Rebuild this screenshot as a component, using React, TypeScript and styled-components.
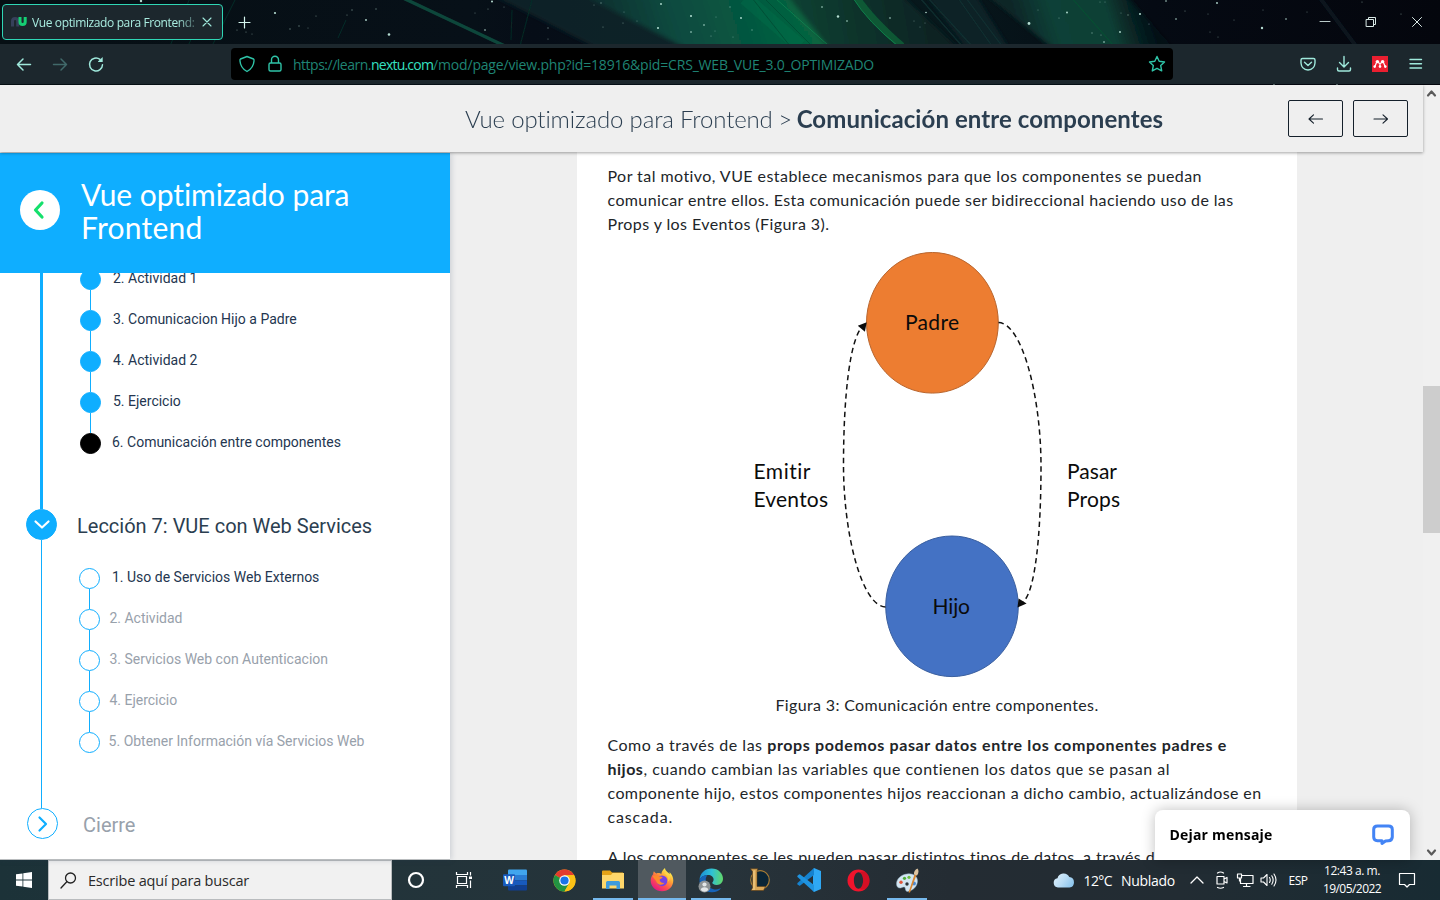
import React from "react";
import styled, { createGlobalStyle, css } from "styled-components";

const GlobalStyle = createGlobalStyle`
  *, *::before, *::after { box-sizing: border-box; }
  body { margin: 0; overflow: hidden; background: #efefef; }
`;

const ui = `"Open Sans", "Noto Sans", sans-serif`;
const lato = `Lato, "Open Sans", sans-serif`;
const roboto = `Roboto, "Liberation Sans", sans-serif`;
const blue = "#0faeff";

const Screen = styled.div`
  width: 1440px;
  height: 900px;
  display: flex;
  flex-direction: column;
  overflow: hidden;
`;

const Track = styled.span<{ $ls?: number; $color?: string }>`
  letter-spacing: ${(p) => p.$ls ?? 0}px;
  ${(p) => p.$color && css`color: ${p.$color};`}
`;

const Spacer = styled.span<{ $w: number }>`
  width: ${(p) => p.$w}px;
  flex: none;
`;

/* ---------- browser chrome ---------- */

const Chrome = styled.header`
  position: relative;
  height: 85px;
  flex: none;
  background: #050a10;
  font-family: ${ui};
`;

const NightSky = styled.svg`
  position: absolute;
  inset: 0;
  display: block;
`;

const TitleBar = styled.div`
  position: relative;
  height: 44px;
  display: flex;
  align-items: flex-start;
  padding: 4px 0 0 2px;
`;

const Tab = styled.div`
  width: 221px;
  height: 36px;
  border: 1px solid #2fd6b5;
  border-radius: 4px;
  background: #1c272d;
  display: flex;
  align-items: center;
  padding: 0 10px 0 7px;
`;

const TabLabel = styled.div`
  width: 164px;
  margin-left: 4px;
  margin-right: 6px;
  padding-top: 1px;
  overflow: hidden;
  white-space: nowrap;
  font-size: 12px;
  line-height: 18px;
  letter-spacing: -0.38px;
  color: #a9ece0;
  mask-image: linear-gradient(to right, #000 145px, rgba(0, 0, 0, 0.3) 163px);
`;

const NewTab = styled.div`
  margin: 12px 0 0 15px;
  line-height: 0;
`;

const WindowButtons = styled.div`
  margin-left: auto;
  display: flex;
  height: 36px;
  & > span {
    width: 46px;
    display: flex;
    align-items: center;
    justify-content: center;
  }
`;

const NavBar = styled.div`
  position: relative;
  height: 40px;
  display: flex;
  align-items: center;
  background: #1c272d;
  padding: 0 14px 0 15px;
`;

const NavButtons = styled.div`
  display: flex;
  gap: 18px;
  width: 216px;
`;

const UrlBar = styled.div`
  width: 942px;
  height: 32px;
  border-radius: 4px;
  background: #000;
  display: flex;
  align-items: center;
  padding: 0 7px;
`;

const Url = styled.div`
  margin-left: 9px;
  flex: 1;
  white-space: nowrap;
  font-size: 14px;
  line-height: 20px;
  padding-top: 2px;
  color: #1f8474;
`;

const Tools = styled.div`
  margin-left: auto;
  display: flex;
  gap: 16px;
`;

/* ---------- page ---------- */

const Viewport = styled.div`
  position: relative;
  flex: 1;
  min-height: 0;
  display: flex;
  background: #efefef;
`;

const Page = styled.div`
  flex: 1;
  display: flex;
  flex-direction: column;
  min-width: 0;
`;

const PageHeader = styled.div`
  position: relative;
  z-index: 2;
  height: 67px;
  flex: none;
  display: flex;
  align-items: center;
  background: #efefef;
  box-shadow: 0 1px 3px rgba(0, 0, 0, 0.36);
  padding: 0 15px 0 465px;
`;

const Crumbs = styled.h1`
  margin: 0;
  flex: 1;
  white-space: nowrap;
  font: 300 24px/30px ${lato};
  color: #2b3e50;
  b { font-weight: 700; }
`;

const PageButton = styled.button`
  width: 55px;
  height: 37px;
  margin-left: 10px;
  padding: 0;
  border: 1px solid #15202b;
  border-radius: 2px;
  background: transparent;
  display: flex;
  align-items: center;
  justify-content: center;
`;

const Columns = styled.div`
  flex: 1;
  min-height: 0;
  display: flex;
`;

const Sidebar = styled.nav`
  position: relative;
  z-index: 1;
  width: 450px;
  flex: none;
  margin-top: 1px;
  display: flex;
  flex-direction: column;
  background: #fff;
  border-bottom: 1px solid #b9bcbe;
  box-shadow: 1px 0 6px rgba(40, 60, 90, 0.2);
`;

const CourseBanner = styled.div`
  height: 120px;
  flex: none;
  display: flex;
  align-items: center;
  padding-left: 20px;
  padding-bottom: 6px;
  background: ${blue};
`;

const BackCircle = styled.div`
  width: 40px;
  height: 40px;
  border-radius: 50%;
  background: #fff;
  display: flex;
  align-items: center;
  justify-content: center;
`;

const CourseTitle = styled.div`
  margin-left: 21px;
  padding-top: 2px;
  font: 400 30px/33px ${lato};
  color: #fff;
`;

const Outline = styled.div`
  flex: 1;
  min-height: 0;
  overflow: hidden;
`;

const Section = styled.div<{ $height: number }>`
  display: flex;
  height: ${(p) => p.$height}px;
`;

const Rail = styled.div<{ $thick?: boolean }>`
  width: ${(p) => (p.$thick ? 3 : 1)}px;
  margin-left: ${(p) => (p.$thick ? 40 : 41)}px;
  background: ${blue};
`;

const Steps = styled.ul<{ $left: number; $top: number }>`
  list-style: none;
  margin: ${(p) => p.$top}px 0 0 ${(p) => p.$left}px;
  padding: 0;
`;

const Step = styled.li`
  display: flex;
  height: 41px;
`;

const StepMark = styled.div`
  width: 21px;
  display: flex;
  flex-direction: column;
  align-items: center;
`;

const Dot = styled.div<{ $kind: "done" | "current" | "open" }>`
  width: 21px;
  height: 21px;
  flex: none;
  border-radius: 50%;
  border: 1px solid ${(p) => (p.$kind === "current" ? "#000" : blue)};
  background: ${(p) => ({ done: blue, current: "#000", open: "#fff" })[p.$kind]};
`;

const Link = styled.div`
  flex: 1;
  width: 1px;
  background: ${blue};
`;

const StepLabel = styled.div<{ $gap: number; $muted?: boolean }>`
  margin-left: ${(p) => p.$gap}px;
  font: 400 14px/19px ${roboto};
  color: ${(p) => (p.$muted ? "#98a1ab" : "#243650")};
  white-space: nowrap;
`;

const LessonRow = styled.div<{ $left: number }>`
  display: flex;
  align-items: center;
  height: 31px;
  padding-left: ${(p) => p.$left}px;
`;

const LessonBadge = styled.div<{ $filled?: boolean }>`
  width: 31px;
  height: 31px;
  border-radius: 50%;
  border: 1px solid ${blue};
  background: ${(p) => (p.$filled ? blue : "#fff")};
  display: flex;
  align-items: center;
  justify-content: center;
`;

const LessonTitle = styled.div<{ $gap: number; $muted?: boolean }>`
  margin-left: ${(p) => p.$gap}px;
  padding-top: 3px;
  font: 400 20px/24px ${roboto};
  color: ${(p) => (p.$muted ? "#98a1ab" : "#2b3e50")};
`;

const Main = styled.main`
  flex: 1;
  min-width: 0;
  overflow: hidden;
  padding-left: 127px;
`;

const Article = styled.article`
  width: 720px;
  height: 760px;
  padding: 12px 30px 0;
  background: #fff;
  font: 400 16px/24px ${lato};
  color: #212529;
`;

const Paragraph = styled.p`
  margin: 0 0 16px 0.5px;
  white-space: nowrap;
`;

const Line = styled.span<{ $ls: number }>`
  display: block;
  letter-spacing: ${(p) => p.$ls}px;
`;

const Figure = styled.figure`
  margin: -16px 0 16px;
  svg { display: block; }
`;

const Caption = styled.figcaption`
  text-align: center;
  letter-spacing: 0.35px;
`;

const ScrollBar = styled.div`
  width: 17px;
  background: #f0f0f0;
  display: flex;
  flex-direction: column;
  align-items: center;
  justify-content: space-between;
`;

const Thumb = styled.div`
  width: 17px;
  height: 147px;
  margin-bottom: 166px;
  margin-top: 140px;
  background: #cdcdcd;
`;

const ChatTab = styled.div`
  position: absolute;
  z-index: 3;
  left: 1155px;
  bottom: 0;
  width: 255px;
  height: 50px;
  display: flex;
  align-items: center;
  justify-content: space-between;
  padding: 0 16px 0 14.5px;
  border-radius: 8px 8px 0 0;
  background: #fff;
  box-shadow: 0 0 14px rgba(0, 0, 0, 0.25);
  font: 700 14px/20px ${ui};
  letter-spacing: 0.19px;
  color: #000;
`;

/* ---------- taskbar ---------- */

const Taskbar = styled.footer`
  height: 40px;
  flex: none;
  display: flex;
  background: linear-gradient(90deg, #1c3238 0%, #22343a 26%, #27333a 50%, #242c33 66%, #222c33 82%, #182b33 100%);
  font-family: ${ui};
  color: #fff;
`;

const StartButton = styled.div`
  width: 48px;
  display: flex;
  align-items: center;
  justify-content: center;
`;

const SearchBox = styled.div`
  width: 344px;
  display: flex;
  align-items: center;
  padding-left: 11px;
  border: 1px solid #b9bcbe;
  background: #f1f1f1;
  color: #2a2a2a;
  font-size: 14.5px;
  letter-spacing: -0.2px;
  span { margin-left: 11px; }
`;

const Apps = styled.div`
  display: flex;
  gap: 1px;
  margin-left: 3px;
`;

const AppButton = styled.div<{ $running?: boolean; $active?: boolean }>`
  width: 48px;
  height: 40px;
  display: flex;
  align-items: center;
  justify-content: center;
  background: ${(p) =>
    p.$active
      ? "linear-gradient(#76b9ed, #76b9ed) center bottom / 48px 2px no-repeat, #50595f"
      : p.$running
        ? "linear-gradient(#76b9ed, #76b9ed) center bottom / 40px 2px no-repeat"
        : "none"};
`;

const Tray = styled.div`
  margin-left: auto;
  display: flex;
  align-items: center;
  padding-right: 24px;
`;

const Weather = styled.div`
  display: flex;
  align-items: center;
  font-size: 14px;
  line-height: 20px;
  padding-top: 1px;
  margin-right: 13px;
  svg { margin: 0 9px 1px 0; }
`;

const TrayIcons = styled.div`
  display: flex;
  align-items: center;
  gap: 6px;
  margin-right: 2px;
`;

const Language = styled.div`
  width: 36px;
  text-align: center;
  font-size: 12px;
  letter-spacing: -0.5px;
`;

const Clock = styled.div`
  width: 72px;
  text-align: center;
  font-size: 12px;
  line-height: 18px;
  display: flex;
  flex-direction: column;
  margin-right: 10px;
`;

/* ---------- drawings ---------- */

const stars: [number, number, number][] = [
  [141, 1, 1.2], [275, 13, 1.1], [316, 16, 0.6], [352, 10, 0.7], [347, 15, 0.6], [376, 9, 0.7], [366, 20, 0.9],
  [389, 34.5, 1.3], [299, 26, 0.7], [290, 29, 0.7], [308, 28, 0.5], [237, 30, 0.6], [246, 32, 0.6], [252, 34, 0.5],
  [492, 1.5, 1], [504, 7, 0.5], [488, 9, 0.6], [485, 30, 0.8], [548, 28, 0.7], [548, 39, 0.6], [601, 3, 0.7],
  [594, 5, 0.5], [624, 12, 0.5], [623, 23, 0.6], [637, 21, 0.5], [603, 27, 0.6], [661, 4, 0.9], [691, 16, 1],
  [658, 28, 1], [691, 32, 0.8], [704, 25, 0.8], [716, 17, 0.5], [715, 31, 0.5], [711, 36, 0.6], [730, 7, 0.7],
  [741, 18, 0.9], [752, 30, 0.7], [733, 37, 0.5], [822, 7, 0.8], [838, 16.5, 1.2], [847, 21, 0.8], [890, 18, 0.8],
  [926, 12.5, 0.8], [914, 21, 0.5], [925, 23, 0.5], [920, 27, 0.5], [1029, 23.5, 1.4], [1067, 12.5, 0.9],
  [1059, 18, 0.6], [1038, 10, 0.5], [1100, 2, 0.5], [1105, 2, 0.5], [1121, 13, 0.5], [1128, 15, 0.7],
  [1140, 14, 1], [1149, 24, 0.6], [1120, 32, 0.9], [1092, 33, 0.7], [1101, 35, 0.6], [1104, 42, 0.8],
  [1166, 1, 0.8], [1185, 11, 0.6], [1176, 19, 0.8], [1217, 3, 0.9], [1208, 14, 0.5], [1234, 20, 0.5],
  [1210, 32, 0.5], [1218, 37, 0.5], [1262, 28, 1.2], [1286, 19, 0.8], [1263, 10, 0.5], [1307, 12, 0.5],
  [1274, 84, 0.8], [1337, 84, 0.8], [1401, 14, 0.6], [475, 13, 0.5], [1362, 2, 0.6],
];

const SkyArt = () => (
  <NightSky width="1440" height="85" viewBox="0 0 1440 85">
    <defs>
      <linearGradient id="sky" x1="0" x2="1440" y1="0" y2="0" gradientUnits="userSpaceOnUse">
        <stop offset="0" stopColor="#060f14" />
        <stop offset="0.33" stopColor="#071018" />
        <stop offset="0.37" stopColor="#060d17" />
        <stop offset="0.65" stopColor="#07181c" />
        <stop offset="0.8" stopColor="#050a13" />
        <stop offset="1" stopColor="#04060d" />
      </linearGradient>
      <linearGradient id="glow" x1="560" x2="815" y1="60" y2="-20" gradientUnits="userSpaceOnUse">
        <stop offset="0" stopColor="#0a2026" stopOpacity="0.3" />
        <stop offset="0.2" stopColor="#0b3130" />
        <stop offset="0.45" stopColor="#0a4a3f" />
        <stop offset="0.7" stopColor="#06573f" />
        <stop offset="1" stopColor="#07693f" />
      </linearGradient>
      <linearGradient id="side" x1="780" x2="960" y1="30" y2="0" gradientUnits="userSpaceOnUse">
        <stop offset="0" stopColor="#0a4433" />
        <stop offset="0.5" stopColor="#0b302a" />
        <stop offset="1" stopColor="#0a1c20" />
      </linearGradient>
      <linearGradient id="beam" x1="1020" x2="1145" y1="40" y2="0" gradientUnits="userSpaceOnUse">
        <stop offset="0" stopColor="#0b2527" />
        <stop offset="0.3" stopColor="#0b4137" />
        <stop offset="0.7" stopColor="#0b3f35" />
        <stop offset="1" stopColor="#07181b" stopOpacity="0.5" />
      </linearGradient>
      <filter id="soft"><feGaussianBlur stdDeviation="2" /></filter>
      <filter id="faint"><feGaussianBlur stdDeviation="0.5" /></filter>
    </defs>
    <rect width="1440" height="85" fill="url(#sky)" />
    <g filter="url(#soft)">
      <path d="M490-6H620L720 50H600Z" fill="#0a2429" opacity="0.8" />
      <path d="M745-6H900L960 50H800Z" fill="url(#side)" />
      <path d="M580-6H786L830 50H690Z" fill="url(#glow)" />
      <path d="M985-6H1125L1175 50H1055Z" fill="url(#beam)" />
      <path d="M925-6H975L1010 50H968Z" fill="#0a2226" />
    </g>
    <g filter="url(#faint)" fill="none">
      <path d="M403-2 507 47" stroke="#0f463b" strokeWidth="3.5" />
      <path d="M745-2 800 46" stroke="#0a7a4a" strokeWidth="14" opacity="0.25" />
      <path d="M775-2 829 46" stroke="#129257" strokeWidth="1" opacity="0.55" />
      <path d="M764-2 812 46M752-2 790 46" stroke="#053c2c" strokeWidth="1" opacity="0.5" />
      <path d="M857-2Q872 20 902 46" stroke="#0a6138" strokeWidth="7" opacity="0.8" />
      <path d="M853-2Q868 22 898 46" stroke="#12804a" strokeWidth="1" />
      <path d="M1070-4 1114 46" stroke="#0a5a30" strokeWidth="1" opacity="0.7" />
      <path d="M920-2 962 46M928-2 972 46M958-2 992 46M966-2 1002 46" stroke="#123636" strokeWidth="1.2" opacity="0.7" />
      <path d="M236-2 212 46M200 20 188 46M346 20 338 38M190-2 170 46" stroke="#0c4a38" strokeWidth="1" opacity="0.5" />
      <path d="M532 0 520 46M512 10 511 40" stroke="#0a3028" strokeWidth="1.2" opacity="0.7" />
      <path d="M1320-2 1356 46" stroke="#0b1d25" strokeWidth="4" opacity="0.7" />
    </g>
    {stars.map(([x, y, r], i) => (
      <circle key={i} cx={x} cy={y} r={r} fill="#c9f2e6" opacity={r > 0.7 ? 0.9 : 0.5} />
    ))}
  </NightSky>
);

const Stroke = ({ size = 20, color = "#9fe9dc", w = 1.4, d, vb }: { size?: number; color?: string; w?: number; d: string; vb?: string }) => (
  <svg width={size} height={size} viewBox={vb ?? `0 0 ${size} ${size}`} fill="none" stroke={color} strokeWidth={w} strokeLinecap="round" strokeLinejoin="round">
    <path d={d} />
  </svg>
);

const TabIcon = () => (
  <svg width="18" height="12" viewBox="0 0 18 12" fill="none" strokeWidth="3">
    <path d="M2.500 10.500V5a2.600 2.600 0 0 1 5.200 0v5.500" stroke="#36405a" />
    <path d="M10 1v5a2.600 2.600 0 0 0 5.200 0V1" stroke="#15cf74" />
  </svg>
);

const DiagramText = styled.text`
  font: 400 21px ${lato};
  font-variant-ligatures: none;
  fill: #0b0b0b;
`;

const Diagram = () => (
  <svg width="660" height="457" viewBox="607 236 660 457">
    <ellipse cx="932.400" cy="322.800" rx="65.900" ry="70.300" fill="#ed7d31" stroke="#b9652d" strokeWidth="1" />
    <ellipse cx="952" cy="606.300" rx="66.300" ry="70.300" fill="#4472c4" stroke="#3a5f9f" strokeWidth="1" />
    <g fill="none" stroke="#111" strokeWidth="1.500" strokeDasharray="5.400 3.800">
      <path d="M998.500 322.600C1022 323 1041 396 1041 466C1041 536 1035 592 1023 602" />
      <path d="M885.500 607C862 606 843.500 535 843.500 465C843.500 395 850 340 862 327" />
    </g>
    <path d="M866.700 322.300 857.800 325.800 864.900 331.800ZM1017.500 607.500 1018.600 598.600 1026.600 603.500Z" fill="#0b0b0b" />
    <DiagramText x="905" y="330.400" textLength="54">Padre</DiagramText>
    <DiagramText x="932.500" y="613.800" textLength="37.500">Hijo</DiagramText>
    <DiagramText x="753.500" y="479.200" textLength="57">Emitir</DiagramText>
    <DiagramText x="753.500" y="507.200" textLength="74.500">Eventos</DiagramText>
    <DiagramText x="1067" y="479.200" textLength="50">Pasar</DiagramText>
    <DiagramText x="1067" y="507.200" textLength="53">Props</DiagramText>
  </svg>
);

const WindowsLogo = () => (
  <svg width="16" height="16" viewBox="0 0 16 16" fill="#fff">
    <path d="M0 2.300 6.500 1.400V7.600H0ZM7.300 1.300 16 0V7.600H7.300ZM0 8.400H6.500V14.600L0 13.700ZM7.300 8.400H16V16L7.300 14.700Z" />
  </svg>
);

const TaskView = () => (
  <svg width="18" height="18" viewBox="0 0 18 18" fill="none" stroke="#fff" strokeWidth="1.200">
    <path d="M2.500 5.500H11.500V12.500H2.500ZM1.500 1V3.500H12.500V1M1.500 17V14.500H12.500V17M15.500 1V4.500M15.500 9.500V17" />
    <path d="M14 5.500h3v2.500h-3z" fill="#fff" stroke="none" />
  </svg>
);

const Word = () => (
  <svg width="24" height="24" viewBox="0 0 24 24">
    <path d="M6 1.500h17a1 1 0 0 1 1 1V7H5V2.500a1 1 0 0 1 1-1Z" fill="#41a5ee" />
    <path d="M5 7h19v5.200H5Z" fill="#2b7cd3" />
    <path d="M5 12.200h19v5.200H5Z" fill="#185abd" />
    <path d="M5 17.400h19v4.100a1 1 0 0 1-1 1H6a1 1 0 0 1-1-1Z" fill="#103f91" />
    <rect x="0" y="6.300" width="12" height="12" rx="1" fill="#185abd" />
    <text x="6" y="16" fontSize="10" fontWeight="700" fontFamily={ui} fill="#fff" textAnchor="middle">W</text>
  </svg>
);

const ChromeIcon = () => (
  <svg width="23" height="23" viewBox="0 0 24 24">
    <circle cx="12" cy="12" r="11.500" fill="#fbc116" />
    <path d="M12 12 2.040 6.250A11.500 11.500 0 0 1 21.960 6.250L12 6.500Z" fill="#e33b2e" />
    <path d="M2.040 6.250A11.500 11.500 0 0 0 12 23.500L16.800 14.800 12 12Z" fill="#229342" />
    <path d="M12 6.500H22.100A11.500 11.500 0 0 1 12 23.500L16.800 14.800Z" fill="#fbc116" />
    <circle cx="12" cy="12" r="5.500" fill="#fff" />
    <circle cx="12" cy="12" r="4.300" fill="#1a73e8" />
  </svg>
);

const Explorer = () => (
  <svg width="22" height="20" viewBox="0 0 22 20">
    <path d="M0 1.500Q0 .5 1 .5H8L10 2.500H21V6H0Z" fill="#e6a317" />
    <path d="M0 5H9L10.500 3H22V18.500H0Z" fill="#ffd76a" />
    <path d="M4 19V12.500Q4 11 5.500 11H16.500Q18 11 18 12.500V19H14.500V15.500H7.500V19Z" fill="#3f9bdc" />
  </svg>
);

const Firefox = () => (
  <svg width="24" height="24" viewBox="0 0 24 24">
    <defs>
      <linearGradient id="ff" x1="20" y1="2" x2="5" y2="22" gradientUnits="userSpaceOnUse">
        <stop offset="0.05" stopColor="#fff44f" />
        <stop offset="0.35" stopColor="#ffa436" />
        <stop offset="0.65" stopColor="#ff4f4f" />
        <stop offset="1" stopColor="#e31587" />
      </linearGradient>
    </defs>
    <path d="M15 0C15 3 18.500 4.500 19.500 6 19.800 5.600 19.700 4.800 19.500 4 22 6.500 23.300 9.500 23.300 12.500 23.300 18.700 18.300 23.300 12 23.300S.7 18.500.7 12.500C.7 9.500 2 7.500 3.200 6.200 3.100 5.300 3.500 4 4 3.300 4.500 4.400 5.400 5 6.500 5.400 8 4.800 10.500 5 11.500 6.500 11 6 11.800 2.500 15 0Z" fill="url(#ff)" />
    <circle cx="12" cy="12.800" r="5.400" fill="#7542e5" />
    <path d="M2.500 8C5 6.800 8 7 9.500 8.500 11 8.600 12.300 8.700 12.600 9.300 12.300 10.500 10.500 10.800 9.600 11.700 9.800 14 12 15.300 14.500 14.800 13 17.500 8.500 17.500 6.700 14.500 6 12 4 11 2.500 8Z" fill="#ff8a2c" />
    <path d="M14 5C17 7 19 10 17.500 14 21 12 20.500 7 18 5Z" fill="#ffd84a" opacity="0.7" />
  </svg>
);

const Edge = () => (
  <svg width="26" height="26" viewBox="0 0 26 26">
    <defs>
      <linearGradient id="ed" x1="2" y1="8" x2="25" y2="10" gradientUnits="userSpaceOnUse">
        <stop offset="0" stopColor="#1b8fd6" />
        <stop offset="0.5" stopColor="#2fc1d6" />
        <stop offset="1" stopColor="#61d86a" />
      </linearGradient>
    </defs>
    <path d="M1.500 13C2 6 7 1.500 13.500 1.500 20.500 1.500 25 6.500 25 11.800 25 15.500 22.300 18 18.800 18 15.500 18 14.300 16.500 14.300 15.800 14.300 15.200 15.600 14.600 15.600 12.500 15.600 10 13.200 8 10 8 5.500 8 2.500 10.500 1.500 13Z" fill="url(#ed)" />
    <path d="M1.500 13C2.500 10 6 8 9.500 8.300 7.500 10 7.500 13 8.200 15.500 9.500 20 14 22.500 18 22.500 20.500 22.500 22.500 21 23 21.300 21 24 17.500 25.500 13.500 25.300 6.500 25 1.300 19.500 1.500 13Z" fill="#1763b8" />
    <circle cx="6.500" cy="19.500" r="6" fill="#8f9496" />
    <circle cx="6.500" cy="17.500" r="2.100" fill="#e4e7e8" />
    <path d="M2.700 23Q3 20.300 6.500 20.300T10.300 23Q8.500 24.800 6.500 24.800T2.700 23Z" fill="#e4e7e8" />
  </svg>
);

const League = () => (
  <svg width="24" height="24" viewBox="0 0 24 24">
    <circle cx="12" cy="12" r="9.300" fill="#0a2536" stroke="#a67c35" strokeWidth="1.200" />
    <path d="M2.500 .8H9.800L9 3V18.500H17.500L15.500 22.500H3L4.500 20V3.500Z" fill="#d9a757" stroke="#5d3d16" strokeWidth="0.600" />
    <path d="M5 3V20L4 22H7V2Z" fill="#f0cf8b" opacity="0.600" />
  </svg>
);

const VsCode = () => (
  <svg width="24" height="24" viewBox="0 0 24 24">
    <path d="M17 0 24 3V21L17 24 16 22V2Z" fill="#2fa8f4" />
    <path d="M17 0V7L3.200 17.600Q2.500 18 2 17.600L.5 16.200Q0 15.600.5 15Z" fill="#1582cf" />
    <path d="M17 24V17L3.200 6.400Q2.500 6 2 6.400L.5 7.800Q0 8.400.5 9Z" fill="#1f93e0" />
  </svg>
);

const Opera = () => (
  <svg width="23" height="23" viewBox="0 0 24 24">
    <path fillRule="evenodd" d="M12 .5a11.500 11.500 0 1 0 0 23 11.500 11.500 0 0 0 0-23ZM12 3.500C15 3.500 16.800 7.500 16.800 12S15 20.500 12 20.500 7.200 16.500 7.200 12 9 3.500 12 3.500Z" fill="#f0142c" />
    <path d="M13 3.700C16 1.500 19.500 3 19.700 3.400A11.500 11.500 0 0 1 19.700 20.600C19 21 16 22.500 13 20.300 15.500 19.500 16.800 16 16.800 12S15.500 4.500 13 3.700Z" fill="#b80a1c" opacity="0.500" />
  </svg>
);

const Paint = () => (
  <svg width="25" height="25" viewBox="0 0 25 25">
    <path d="M12 6C18 5 22.500 8 22.500 13S18 23 12.500 23.500C10.500 23.500 10.500 21 10 19.500 9.300 18.500 7.500 19.500 5.500 20 3 20.300 1.500 18.500 1.500 16 1.500 10.500 6.500 6.500 12 6Z" fill="#d3e6f2" stroke="#93b0c4" strokeWidth="0.500" />
    <circle cx="6" cy="14.300" r="1.700" fill="#e0563b" />
    <circle cx="9.500" cy="10.300" r="1.600" fill="#4fae3a" />
    <circle cx="14" cy="9.300" r="1.600" fill="#6cbf3f" />
    <circle cx="12" cy="16" r="1.700" fill="#2b3338" />
    <circle cx="19" cy="15.500" r="1.900" fill="#4b88d0" />
    <path d="M13.500 24.500 19.500 6.500 21.500 7 15 24.500Z" fill="#d98732" />
    <path d="M19 6.500C18.500 4 20 1.500 22.500.5 24 2 23.800 5.500 22 7.500Z" fill="#dcc3a0" />
  </svg>
);

const Cloud = () => (
  <svg width="22" height="16" viewBox="0 0 22 16">
    <defs>
      <linearGradient id="cl" x1="0" y1="0" x2="22" y2="16" gradientUnits="userSpaceOnUse">
        <stop offset="0" stopColor="#e9f5fd" />
        <stop offset="0.5" stopColor="#b9ddf6" />
        <stop offset="1" stopColor="#7dbdea" />
      </linearGradient>
    </defs>
    <path d="M5 15.500A4.700 4.700 0 0 1 4.500 6.200 6.300 6.300 0 0 1 16.300 5 5.300 5.300 0 0 1 16.500 15.500Z" fill="url(#cl)" />
  </svg>
);

/* ---------- content ---------- */

const doneSteps = ["2. Actividad 1", "3. Comunicacion Hijo a Padre", "4. Actividad 2", "5. Ejercicio", "6. Comunicación entre componentes"];
const nextSteps: [string, number][] = [
  ["1. Uso de Servicios Web Externos", 12],
  ["2. Actividad", 9.4],
  ["3. Servicios Web con Autenticacion", 9.4],
  ["4. Ejercicio", 9.4],
  ["5. Obtener Información vía Servicios Web", 8.6],
];

export default function App() {
  return (
    <Screen>
      <GlobalStyle />
      <Chrome>
        <SkyArt />
        <TitleBar>
          <Tab>
            <TabIcon />
            <TabLabel>Vue optimizado para Frontend: C</TabLabel>
            <Stroke size={10} vb="0 0 10 10" w={1.1} d="M1 1 9 9M9 1 1 9" />
          </Tab>
          <NewTab>
            <Stroke size={13} w={1.2} color="#d5f5ee" d="M6.500 1V12M1 6.500H12" />
          </NewTab>
          <WindowButtons>
            <span><Stroke size={12} w={1} color="#b9cbc9" d="M1 5.500H11" /></span>
            <span><Stroke size={12} w={1} color="#d9e9e6" d="M1.500 3.500H8.500V10.500H1.500ZM3.500 3.500V1.500H10.500V8.500H8.500" /></span>
            <span><Stroke size={12} w={1} color="#d9e9e6" d="M1.500 1.500 10.500 10.500M10.500 1.500 1.500 10.500" /></span>
          </WindowButtons>
        </TitleBar>
        <NavBar>
          <NavButtons>
            <Stroke size={18} w={1.5} d="M2.500 9.500H15.500M8 4 2.500 9.500 8 15" />
            <Stroke size={18} w={1.5} color="#41696a" d="M2.500 9.500H15.500M10 4 15.500 9.500 10 15" />
            <svg width="18" height="18" viewBox="0 0 18 18" fill="none" stroke="#9fe9dc" strokeWidth="1.500" strokeLinecap="round">
              <path d="M15.500 9.700A6.500 6.500 0 1 1 13 4.400" />
              <path d="M11 7V6.500L15.700 2V7Z" fill="#9fe9dc" stroke="none" />
            </svg>
          </NavButtons>
          <UrlBar>
            <Stroke size={18} color="#2fc4a8" d="M9 1.500 15.500 4Q16.200 4.300 16 6 15.500 13 9 16.500 2.500 13 2 6 1.800 4.300 2.500 4Z" />
            <Spacer $w={10} />
            <Stroke size={18} color="#2fc4a8" d="M4.500 8H13.500Q15 8 15 9.500V14.500Q15 16 13.500 16H4.500Q3 16 3 14.500V9.500Q3 8 4.500 8ZM5.500 8V4.800A3.500 3.500 0 0 1 12.500 4.800V8" />
            <Url>
              <Track $ls={-0.49}>https://learn.</Track>
              <Track $ls={-0.79} $color="#35e0c0">nextu.com</Track>
              <Track $ls={-0.183}>/mod/page/view.php?id=18916&amp;pid=CRS_WEB_VUE_3.0_OPTIMIZADO</Track>
            </Url>
            <Stroke size={18} color="#2fc4a8" d="M9 1.500 11.200 6.300 16.500 7 12.700 10.600 13.700 15.900 9 13.300 4.300 15.900 5.300 10.600 1.500 7 6.800 6.300Z" />
          </UrlBar>
          <Tools>
            <Stroke size={20} d="M4.500 4.500H15.500Q17 4.500 17 6V9Q16.500 15.500 10 16 3.500 15.500 3 9V6Q3 4.500 4.500 4.500ZM6.500 8.300 10 11.500 13.500 8.300" />
            <Stroke size={20} d="M10 2.500V12.500M5.500 8.500 10 13 14.500 8.500M3.500 14V15.500Q3.500 17 5 17H15Q16.500 17 16.500 15.500V14" />
            <svg width="20" height="20" viewBox="0 0 20 20">
              <rect x="2" y="2" width="16" height="16" fill="#ea1f30" />
              <g fill="#fff">
                <circle cx="7.400" cy="7.600" r="1.700" />
                <circle cx="12.600" cy="7.600" r="1.700" />
                <circle cx="4.700" cy="12.600" r="1.300" />
                <circle cx="10" cy="12.600" r="1.300" />
                <circle cx="15.300" cy="12.600" r="1.300" />
              </g>
              <path d="M5 12.300 6.700 8M10 12V9.500M15 12.300 13.300 8M7.500 8.200 10 9.500 12.500 8.200" fill="none" stroke="#fff" strokeWidth="1.200" />
            </svg>
            <Stroke size={20} d="M4 5.500H15.500M4 9.800H15.500M4 14H15.500" />
          </Tools>
        </NavBar>
      </Chrome>

      <Viewport>
        <Page>
          <PageHeader>
            <Crumbs>
              <Track $ls={-0.15}>Vue optimizado para Frontend</Track>
              <Track $ls={-1}> &gt; </Track>
              <Track as="b" $ls={0.08}>Comunicación entre componentes</Track>
            </Crumbs>
            <PageButton><Stroke size={16} w={1.1} color="#15202b" d="M1 8H14.500M5.500 3.800 1 8 5.500 12.200" /></PageButton>
            <PageButton><Stroke size={16} w={1.1} color="#15202b" d="M1 8H14.500M10 3.800 14.500 8 10 12.200" /></PageButton>
          </PageHeader>
          <Columns>
            <Sidebar>
              <CourseBanner>
                <BackCircle><Stroke size={20} w={3.2} color="#15e06c" d="M12 3 5.500 10 12 17" /></BackCircle>
                <CourseTitle>
                  <Track $ls={-0.07}>Vue optimizado para</Track><br />
                  <Track $ls={0.25}>Frontend</Track>
                </CourseTitle>
              </CourseBanner>
              <Outline>
                <Section $height={236}>
                  <Rail $thick />
                  <Steps $left={37} $top={-4}>
                    {doneSteps.map((label, i) => (
                      <Step key={label}>
                        <StepMark>
                          <Dot $kind={i === 4 ? "current" : "done"} />
                          {i < 4 && <Link />}
                        </StepMark>
                        <StepLabel $gap={i === 4 ? 11 : 12}>{label}</StepLabel>
                      </Step>
                    ))}
                  </Steps>
                </Section>
                <LessonRow $left={26}>
                  <LessonBadge $filled><Stroke size={18} w={2.2} color="#fff" d="M2.500 5.500 9 11.500 15.500 5.500" /></LessonBadge>
                  <LessonTitle $gap={20}>Lección 7: VUE con Web Services</LessonTitle>
                </LessonRow>
                <Section $height={268}>
                  <Rail />
                  <Steps $left={37} $top={28}>
                    {nextSteps.map(([label, gap], i) => (
                      <Step key={label}>
                        <StepMark>
                          <Dot $kind="open" />
                          {i < 4 && <Link />}
                        </StepMark>
                        <StepLabel $gap={gap} $muted={i > 0}>{label}</StepLabel>
                      </Step>
                    ))}
                  </Steps>
                </Section>
                <LessonRow $left={27}>
                  <LessonBadge><Stroke size={18} w={2.2} color={blue} d="M5.500 2.500 12 9 5.500 15.500" /></LessonBadge>
                  <LessonTitle $gap={25} $muted>Cierre</LessonTitle>
                </LessonRow>
              </Outline>
            </Sidebar>
            <Main>
              <Article>
                <Paragraph>
                  <Line $ls={0.44}>Por tal motivo, VUE establece mecanismos para que los componentes se puedan</Line>
                  <Line $ls={0.38}>comunicar entre ellos. Esta comunicación puede ser bidireccional haciendo uso de las</Line>
                  <Line $ls={0.42}>Props y los Eventos (Figura 3).</Line>
                </Paragraph>
                <Figure>
                  <Diagram />
                  <Caption>Figura 3: Comunicación entre componentes.</Caption>
                </Figure>
                <Paragraph>
                  <Line $ls={0.51}>Como a través de las <Track as="b" $ls={0.63}>props podemos pasar datos entre los componentes padres e</Track></Line>
                  <Line $ls={0.505}><b>hijos</b>, cuando cambian las variables que contienen los datos que se pasan al</Line>
                  <Line $ls={0.398}>componente hijo, estos componentes hijos reaccionan a dicho cambio, actualizándose en</Line>
                  <Line $ls={0.85}>cascada.</Line>
                </Paragraph>
                <Paragraph>
                  <Line $ls={0.423}>A los componentes se les pueden pasar distintos tipos de datos, a través de las</Line>
                </Paragraph>
              </Article>
            </Main>
          </Columns>
        </Page>
        <ScrollBar>
          <Stroke size={17} w={2.2} color="#5a5a5a" d="M5 10.500 8.500 6.500 12 10.500" />
          <Thumb />
          <Stroke size={17} w={2.2} color="#5a5a5a" d="M5 7.500 8.500 11.500 12 7.500" />
        </ScrollBar>
        <ChatTab>
          Dejar mensaje
          <svg width="22" height="22" viewBox="0 0 22 22" fill="none" stroke="#4384f5" strokeWidth="3" strokeLinejoin="round">
            <path d="M5.500 2H16.500Q20.300 2 20.300 5.500V13Q20 16.500 16.500 16.700L13.500 17 10 19.500V16.800H5.500Q1.700 16.500 1.700 13V5.500Q1.700 2 5.500 2Z" />
          </svg>
        </ChatTab>
      </Viewport>

      <Taskbar>
        <StartButton><WindowsLogo /></StartButton>
        <SearchBox>
          <Stroke size={17} w={1.3} color="#222" d="M15.500 6A5 5 0 1 1 5.500 6 5 5 0 0 1 15.500 6ZM6.800 9.700 1 16" />
          <span>Escribe aquí para buscar</span>
        </SearchBox>
        <AppButton><Stroke size={18} w={2.2} color="#fff" d="M16 9A7 7 0 1 1 2 9 7 7 0 0 1 16 9Z" /></AppButton>
        <AppButton><TaskView /></AppButton>
        <Apps>
          <AppButton><Word /></AppButton>
          <AppButton><ChromeIcon /></AppButton>
          <AppButton $running><Explorer /></AppButton>
          <AppButton $active><Firefox /></AppButton>
          <AppButton $running><Edge /></AppButton>
          <AppButton><League /></AppButton>
          <AppButton><VsCode /></AppButton>
          <AppButton><Opera /></AppButton>
          <AppButton $running><Paint /></AppButton>
        </Apps>
        <Tray>
          <Weather>
            <Cloud />
            <Track $ls={-0.6}>12°C</Track>
            <Spacer $w={9} />
            <Track $ls={-0.28}>Nublado</Track>
          </Weather>
          <TrayIcons>
            <Stroke size={18} w={1.3} color="#fff" d="M3 12 9 6 15 12" />
            <Stroke size={18} w={1.2} color="#fff" d="M5 5.500H12V13H5ZM12 8 15 6.500V12L12 10.500M5.500 2Q8.500 0 11.500 2M5.500 16.500Q8.500 18 11.500 16.500" />
            <Stroke size={18} w={1.2} color="#fff" d="M6 4.500H17V12.500H4.500V8M10.500 12.500V15.500M7.500 15.500H14M1.500 3H5.500V7H1.500ZM3.500 7V10" />
            <Stroke size={18} w={1.1} color="#fff" d="M1 7H3.500L7 3.500V14.500L3.500 11H1ZM9.500 6.500Q11 9 9.500 11.500M11.800 4.800Q14.500 9 11.800 13.200M14 3Q18 9 14 15" />
          </TrayIcons>
          <Language>ESP</Language>
          <Clock>
            <Track $ls={-0.45}>12:43 a. m.</Track>
            <Track $ls={-0.55}>19/05/2022</Track>
          </Clock>
          <Stroke size={18} w={1.2} color="#fff" d="M1.500 2.500H16.500V13.500H11.500L9 16 6.500 13.500H1.500Z" />
        </Tray>
      </Taskbar>
    </Screen>
  );
}
